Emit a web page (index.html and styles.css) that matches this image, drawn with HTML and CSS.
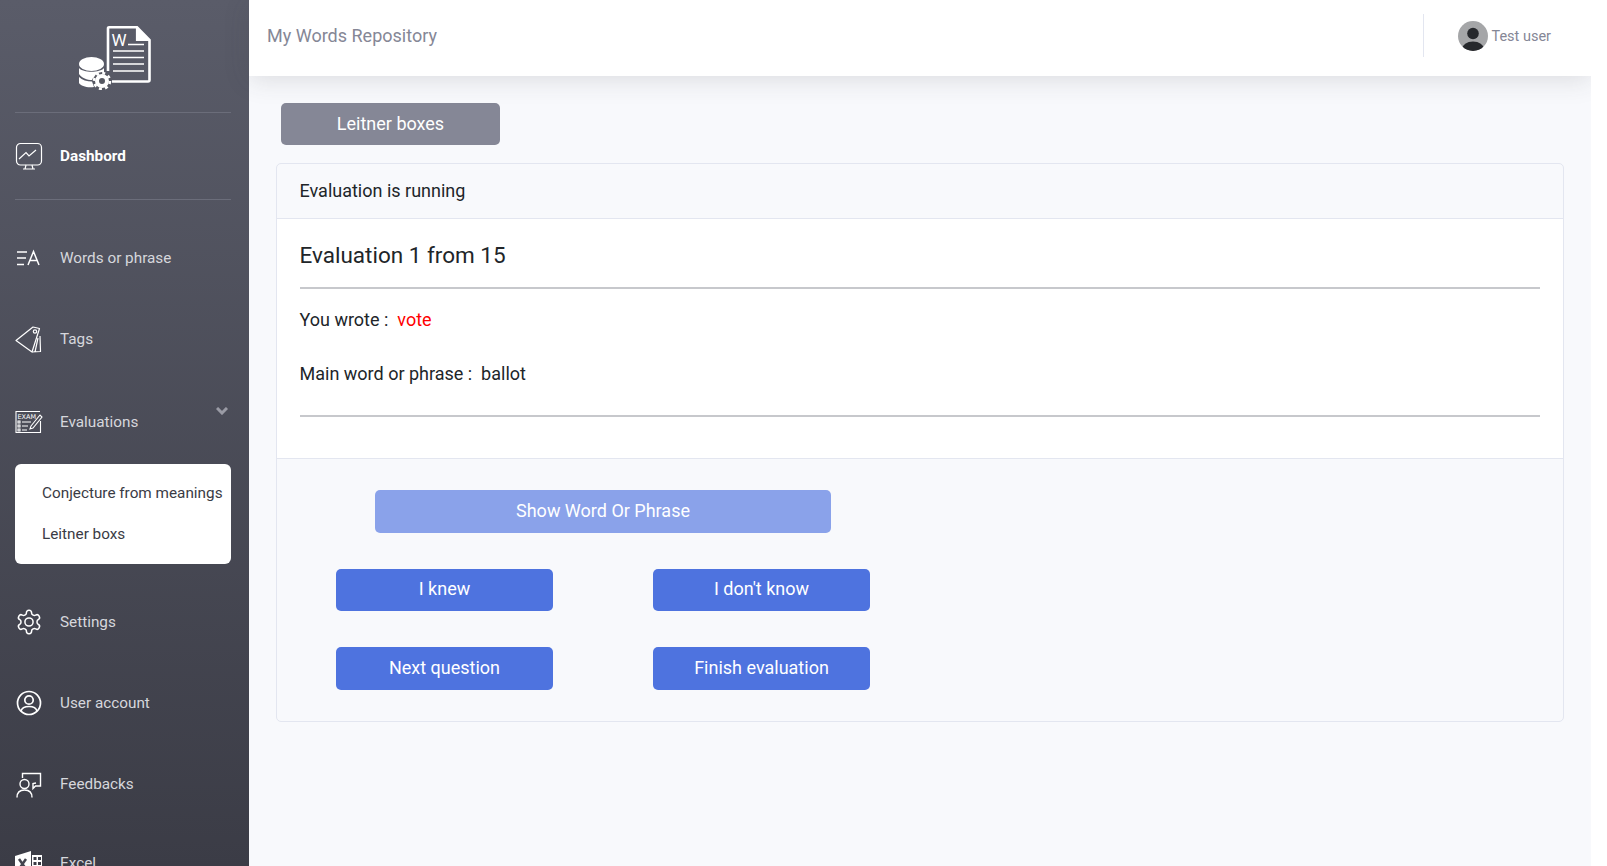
FILE: index.html
```html
<!doctype html>
<html lang="en-US">
<head>
<title>My Words Repository</title>
<link rel="stylesheet" href="styles.css">
</head>
<body>
<div class="sidebar">
	<div class="logo">
		<svg width="72" height="64" viewBox="0 0 72 64" fill="none" stroke="#fff">
			<path d="M29 45V2.500C29 1.500 29.500 1.300 30 1.300H58L70.500 14V54C70.500 55 69.500 55.500 69 55.500H33" stroke-width="2.600"/>
			<path d="M58 1V14H70.500" stroke-width="2.200"/>
			<path d="M59 3L69 13H59Z" fill="#fff" stroke="none"/>
			<text x="32.500" y="19.500" class="logo-w">W</text>
			<path d="M49 18.500H65M34 25H65M34 31.500H65M34 38H65M34 45H65" stroke-width="1.700"/>
			<ellipse cx="12.500" cy="38" rx="12.500" ry="7" fill="#fff" stroke="none"/>
			<path d="M0 42C4 47 21 47 25 42V48C21 51 17 52 14 52L13 54C8 54 3 52 0 48Z" fill="#fff" stroke="none"/>
			<path d="M0 51C3 54 8 55.500 13 55.500L15 61C8 62 2 60 0 57Z" fill="#fff" stroke="none"/>
			<circle cx="23" cy="55" r="9" fill="#565862" stroke="none"/>
			<circle cx="23" cy="55" r="5" stroke-width="4"/>
			<circle cx="23" cy="55" r="8" stroke-width="2.500" stroke-dasharray="3 3.280"/>
		</svg>
	</div>
	<div class="side-line"></div>
	<div class="side-item active">
		<svg class="side-icon" viewBox="0 0 28 28" fill="none" stroke="#fff" stroke-width="1.200">
			<rect x="1.500" y="1.500" width="25" height="21.500" rx="4"/>
			<path d="M4 17L11 10.500L14 14L21 8M11 23L10 27M17 23L18 27M8 27H20"/>
		</svg>
		<span>Dashbord</span>
	</div>
	<div class="side-line"></div>
	<div class="side-item first">
		<svg class="side-icon" viewBox="0 0 28 28" fill="none" stroke="#fff" stroke-width="1.500">
			<path d="M2 8H12M2 14H11M2 20.500H9M13 21L18.500 7.500L24 21M15 16.500H22"/>
		</svg>
		<span>Words or phrase</span>
	</div>
	<div class="side-item tags">
		<svg class="side-icon" viewBox="0 0 28 28" fill="none" stroke="#fff" stroke-width="1.200" stroke-linejoin="round">
			<path d="M1 15.500L18 2L24.500 3.500L17 27Z"/>
			<path d="M23 13L20 27M25 11L25.500 26.500L17 27"/>
			<circle cx="20" cy="6.500" r="1.700"/>
		</svg>
		<span>Tags</span>
	</div>
	<div class="side-item has-sub">
		<svg class="side-icon" viewBox="0 0 28 28" fill="none" stroke="#fff" stroke-width="1.100">
			<path d="M25.500 13V24.500H1V3.500H25"/>
			<text x="2.500" y="10.500" class="exam">EXAM</text>
			<path d="M3 13H5V15H3ZM3 17H5V19H3ZM3 21H5V23H3ZM7 14H16M7 18H13M7 22H12"/>
			<path d="M16 18L25 7L27 9L18 20L15 21Z"/>
		</svg>
		<span>Evaluations</span>
		<svg class="chevron" width="12" height="8" viewBox="0 0 12 8" fill="none" stroke="#9a9ba5" stroke-width="3">
			<path d="M1 1L6 6L11 1"/>
		</svg>
	</div>
	<div class="submenu">
		<a>Conjecture from meanings</a>
		<a>Leitner boxs</a>
	</div>
	<div class="side-item after-sub">
		<svg class="side-icon" viewBox="0 0 24 24" fill="none" stroke="#fff" stroke-width="1.300">
			<path d="M12.220 2h-.44a2 2 0 0 0-2 2v.18a2 2 0 0 1-1 1.730l-.43.25a2 2 0 0 1-2 0l-.15-.08a2 2 0 0 0-2.730.73l-.22.38a2 2 0 0 0 .73 2.730l.15.1a2 2 0 0 1 1 1.720v.51a2 2 0 0 1-1 1.740l-.15.09a2 2 0 0 0-.73 2.730l.22.38a2 2 0 0 0 2.730.73l.15-.08a2 2 0 0 1 2 0l.43.25a2 2 0 0 1 1 1.730V20a2 2 0 0 0 2 2h.44a2 2 0 0 0 2-2v-.18a2 2 0 0 1 1-1.730l.43-.25a2 2 0 0 1 2 0l.15.08a2 2 0 0 0 2.730-.73l.22-.39a2 2 0 0 0-.73-2.730l-.15-.08a2 2 0 0 1-1-1.740v-.5a2 2 0 0 1 1-1.740l.15-.09a2 2 0 0 0 .73-2.730l-.22-.38a2 2 0 0 0-2.730-.73l-.15.08a2 2 0 0 1-2 0l-.43-.25a2 2 0 0 1-1-1.730V4a2 2 0 0 0-2-2z"/>
			<circle cx="12" cy="12" r="3.500"/>
		</svg>
		<span>Settings</span>
	</div>
	<div class="side-item">
		<svg class="side-icon" viewBox="0 0 28 28" fill="none" stroke="#fff" stroke-width="1.700">
			<circle cx="14" cy="14" r="11.500"/>
			<circle cx="14" cy="11" r="4.200"/>
			<path d="M6 22C7 18 10 17.500 14 17.500C18 17.500 21 18 22 22"/>
		</svg>
		<span>User account</span>
	</div>
	<div class="side-item feedbacks">
		<svg class="side-icon" viewBox="0 0 28 28" fill="none" stroke="#fff" stroke-width="1.400">
			<path d="M7.500 8V3.500H25.500V16H20.500L18 18.500V13.500L21 13"/>
			<circle cx="9.500" cy="14" r="4.500"/>
			<path d="M2 27.500C2 22 5.500 20 9.500 20C13.500 20 17 22 17 27.500"/>
		</svg>
		<span>Feedbacks</span>
	</div>
	<div class="side-item">
		<svg class="side-icon" viewBox="0 0 28 28">
			<path d="M0 7L16 2V27L0 24Z" fill="#fff"/>
			<path d="M4 10L11 20M11 10L4 20" stroke="#44454f" stroke-width="2.500"/>
			<path d="M17 6H27V23H17ZM18.500 8V11H21.500V8ZM23 8V11H26V8ZM18.500 13V16H21.500V13ZM23 13V16H26V13Z" fill="#fff" fill-rule="evenodd"/>
		</svg>
		<span>Excel</span>
	</div>
</div>
<div class="page">
	<div class="topbar">
		<div class="app-title">My Words Repository</div>
		<div class="user-box">
			<svg class="avatar" width="30" height="30" viewBox="0 0 30 30">
				<defs><clipPath id="round"><circle cx="15" cy="15" r="15"/></clipPath></defs>
				<circle cx="15" cy="15" r="15" fill="#a5a6a8"/>
				<g clip-path="url(#round)" fill="#26282c">
					<circle cx="15" cy="12.500" r="5.800"/>
					<ellipse cx="15" cy="28" rx="11" ry="7.500"/>
				</g>
			</svg>
			<span class="user-name">Test user</span>
		</div>
	</div>
	<div class="content">
		<button class="box-btn">Leitner boxes</button>
		<div class="card">
			<div class="card-head">Evaluation is running</div>
			<div class="card-body">
				<h4>Evaluation 1 from 15</h4>
				<hr>
				<p>You wrote :&nbsp; <span class="wrong">vote</span></p>
				<p class="last-line">Main word or phrase :&nbsp; ballot</p>
				<hr class="last">
			</div>
			<div class="card-foot">
				<button class="blue show-btn">Show Word Or Phrase</button>
				<div class="btn-grid">
					<button class="blue">I knew</button>
					<button class="blue">I don't know</button>
					<button class="blue lower">Next question</button>
					<button class="blue lower">Finish evaluation</button>
				</div>
			</div>
		</div>
	</div>
</div>
<div class="gutter"></div>
</body>
</html>
```
FILE: styles.css
```css
html, body {
	height: 100%;
	margin: 0;
	overflow: hidden;
	font-family: Roboto, "Liberation Sans", sans-serif;
	background-color: #f8f9fc;
	color: #212529;
}
body {
	display: flex;
}
.sidebar {
	width: 249px;
	height: 866px;
	flex-shrink: 0;
	overflow: hidden;
	background: linear-gradient(180deg, #5a5c69 0%, #3b3c46 100%);
	padding: 0 18px 0 15px;
	box-sizing: border-box;
}
.logo {
	height: 112px;
	display: flex;
	justify-content: center;
	padding: 26px 17px 0 0;
	box-sizing: border-box;
}
.logo-w {
	font-family: Roboto, sans-serif;
	font-size: 17px;
	fill: #fff;
	stroke: none;
}
.exam {
	font-family: "DejaVu Sans", sans-serif;
	font-size: 6.500px;
	fill: #fff;
	stroke: none;
}
.side-line {
	height: 1px;
	background: #6b6d7a;
}
.side-item {
	display: flex;
	align-items: center;
	height: 28px;
	margin-bottom: 53px;
	position: relative;
	font-size: 15.300px;
	color: #d6d7dc;
}
.side-item.active {
	margin: 29px 0;
	color: #fff;
	font-weight: 700;
}
.side-item.first {
	margin-top: 44px;
	margin-bottom: 53px;
}
.side-item.tags {
	margin-bottom: 55px;
}
.side-item.has-sub {
	margin-bottom: 28px;
}
.side-item.after-sub {
	margin-top: 44px;
}
.side-item.feedbacks {
	margin-bottom: 51px;
}
.side-icon {
	width: 28px;
	height: 28px;
	margin-right: 17px;
	flex-shrink: 0;
}
.chevron {
	position: absolute;
	right: 3px;
	top: -1px;
}
.submenu {
	background: #fff;
	border-radius: 6px;
	padding: 9px 0 0;
	height: 100px;
	box-sizing: border-box;
}
.submenu a {
	display: block;
	padding: 10px 0 10px 27px;
	font-size: 15.300px;
	line-height: 21px;
	color: #3a3b45;
	white-space: nowrap;
}
.page {
	flex: 1;
	min-width: 0;
}
.gutter {
	width: 16px;
	flex-shrink: 0;
	background: #fff;
	position: relative;
	z-index: 2;
}
.topbar {
	height: 76px;
	background: #fff;
	display: flex;
	align-items: center;
	justify-content: space-between;
	box-shadow: 0 4px 24px rgba(58, 59, 69, 0.15);
	position: relative;
	padding: 0 40px 5px 18px;
	box-sizing: border-box;
}
.app-title {
	font-size: 18px;
	color: #858796;
}
.user-box {
	display: flex;
	align-items: center;
	gap: 3px;
	height: 43px;
	padding-left: 34px;
	border-left: 1px solid #e3e6f0;
	font-size: 14.500px;
	color: #858796;
}
.user-name {
	padding-top: 1px;
}
.content {
	padding: 27px 27px 0 27px;
}
.box-btn {
	display: block;
	width: 219px;
	height: 42px;
	margin: 0 0 18px 5px;
	padding: 0 0 2px;
	border: none;
	border-radius: 5px;
	background: #858796;
	color: #fff;
	font: 18px Roboto, sans-serif;
}
.card {
	border: 1px solid #e3e6f0;
	border-radius: 5px;
}
.card-head {
	height: 55px;
	padding: 0 22.500px;
	line-height: 54px;
	font-size: 18px;
	border-bottom: 1px solid #e3e6f0;
	box-sizing: border-box;
}
.card-body {
	background: #fff;
	padding: 22px 23px 0 22.500px;
	height: 239px;
	box-sizing: border-box;
}
.card-body h4 {
	margin: 0 0 17px;
	font-size: 22.500px;
	font-weight: 400;
	line-height: 29px;
}
hr {
	border: none;
	border-top: 2px solid #c7c8cc;
	margin: 0 0 20px;
}
hr.last {
	margin-top: 0;
}
.card-body p {
	margin: 0 0 33px;
	font-size: 18px;
	line-height: 21px;
}
.card-body p.last-line {
	margin-bottom: 31px;
}
.wrong {
	color: red;
}
.card-foot {
	padding: 31px 0 0 59px;
	height: 263px;
	box-sizing: border-box;
	border-top: 1px solid #e3e6f0;
}
.blue {
	width: 217px;
	height: 42px;
	padding: 0 0 3px;
	border: none;
	border-radius: 5px;
	background: #4e73df;
	color: #fff;
	font: 18px Roboto, sans-serif;
}
.blue.lower {
	height: 43px;
	padding-bottom: 2px;
}
.show-btn {
	display: block;
	width: 456px;
	height: 43px;
	margin: 0 0 36px 39px;
	padding-bottom: 2px;
	background: #8aa2ea;
}
.btn-grid {
	display: grid;
	grid-template-columns: 217px 217px;
	column-gap: 100px;
	row-gap: 36px;
}
```
